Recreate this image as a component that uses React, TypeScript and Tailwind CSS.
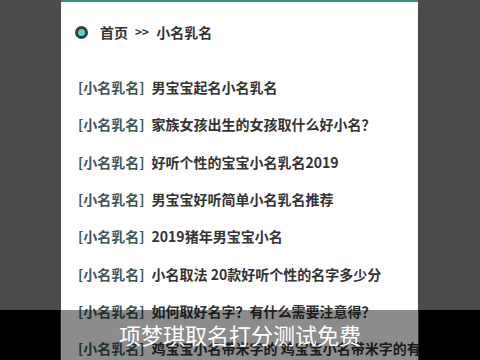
const ROWS = [
  "男宝宝起名小名乳名",
  "家族女孩出生的女孩取什么好小名？",
  "好听个性的宝宝小名乳名2019",
  "男宝宝好听简单小名乳名推荐",
  "2019猪年男宝宝小名",
  "小名取法 20款好听个性的名字多少分",
  "如何取好名字？有什么需要注意得？",
  "鸡宝宝小名带米字的 鸡宝宝小名带米字的有",
];

const cjk = { fontFamily: '"Noto Sans CJK SC", "Noto Sans", sans-serif' };

export default function App() {
  return (
    <div className="relative h-[360px] w-[480px] overflow-hidden bg-[#4b4b4b]" style={cjk}>
      <div className="ml-[61px] h-full w-[357px] border-t-2 border-[#3f8a80] bg-white pt-[15px] pl-[14px]">
        {/* breadcrumb */}
        <div className="flex h-[30px] items-center text-[14px] font-bold text-[#333]">
          <span className="h-[13px] w-[13px] rounded-full border-[3px] border-[#3a3a3a] bg-[#4fd8c6]" />
          <span className="ml-[12px]">首页</span>
          <span className="mx-[7px] text-[12px]">&gt;&gt;</span>
          <span>小名乳名</span>
        </div>

        <div className="mt-[22px] pl-[3px]">
          {ROWS.map((t, i) => (
            <div key={i} className="flex h-[37.3px] items-center whitespace-nowrap text-[14px] font-bold">
              <span className="text-[#3d5757]">[小名乳名]</span>
              <span className="ml-[7px] text-[#333]">{t}</span>
            </div>
          ))}
        </div>
      </div>

      {/* caption bar */}
      <div className="absolute bottom-0 left-0 flex h-[50px] w-full">
        <div className="w-[60px] bg-black" />
        <div className="w-[359px] bg-black/45" />
        <div className="flex-1 bg-black" />
        <div className="absolute inset-0 flex items-center justify-center pb-[2px] text-[22px] text-white">
          项梦琪取名打分测试免费
        </div>
      </div>
    </div>
  );
}
